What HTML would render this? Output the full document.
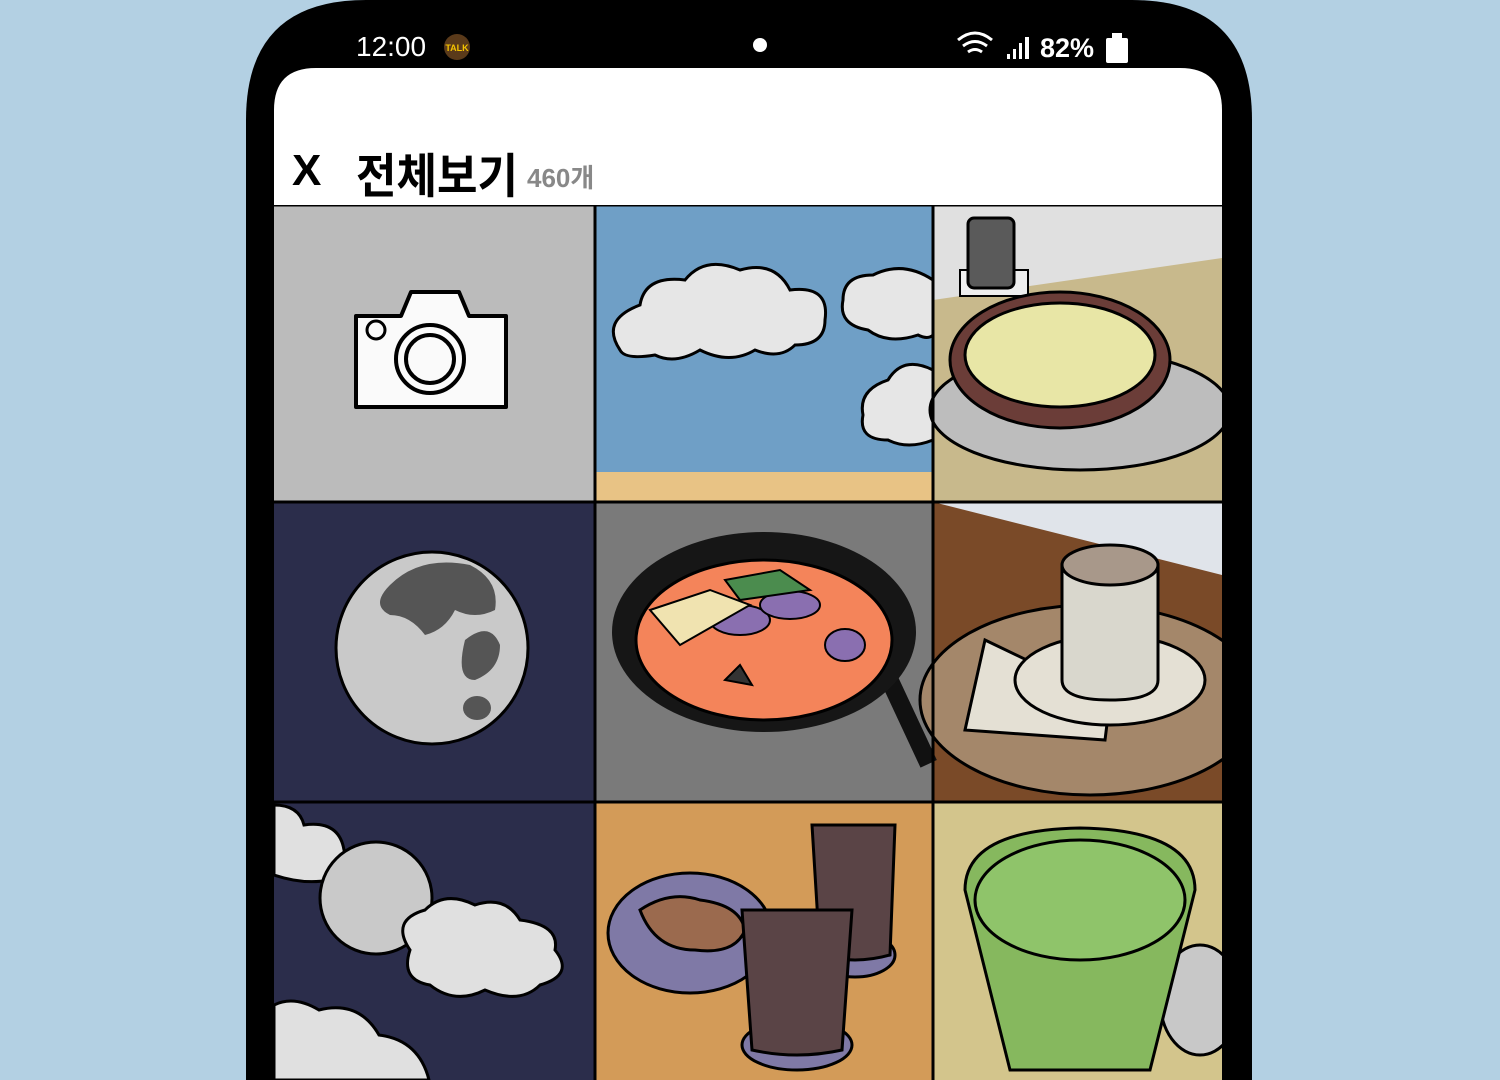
<!DOCTYPE html>
<html><head><meta charset="utf-8"><style>
html,body{margin:0;padding:0;width:1500px;height:1080px;overflow:hidden;background:#b3d0e3}
svg{position:absolute;left:0;top:0}
.t{position:absolute;font-family:"Liberation Sans","Noto Sans CJK KR",sans-serif;}
</style></head><body>
<svg width="1500" height="1080" viewBox="0 0 1500 1080">
<defs><clipPath id="c"><rect x="274" y="205" width="948" height="875"/></clipPath></defs>
<path d="M246 1080 V120 Q246 0 366 0 H1132 Q1252 0 1252 120 V1080 Z" fill="#000"/>
<path d="M274 1080 V110 Q274 68 316 68 H1180 Q1222 68 1222 110 V1080 Z" fill="#fff"/>
<g clip-path="url(#c)">
<rect x="274" y="205" width="321" height="297" fill="#bbbbbb"/>
<rect x="595" y="205" width="338" height="267" fill="#6f9fc6"/>
<rect x="595" y="472" width="338" height="30" fill="#e8c385"/>
<rect x="933" y="205" width="289" height="297" fill="#c8b98c"/>
<polygon points="933,205 1222,205 1222,258 933,300" fill="#e0e0e0"/>
<rect x="274" y="502" width="321" height="300" fill="#2b2d4b"/>
<rect x="595" y="502" width="338" height="300" fill="#7a7a7a"/>
<rect x="933" y="502" width="289" height="300" fill="#7a4a28"/>
<polygon points="933,502 1222,502 1222,575" fill="#e0e4ea"/>
<rect x="274" y="802" width="321" height="278" fill="#2b2d4b"/>
<rect x="595" y="802" width="338" height="278" fill="#d39b58"/>
<rect x="933" y="802" width="289" height="278" fill="#d3c58c"/>
<path d="M356 316 h45 l10 -24 h48 l10 24 h37 v91 h-150 z" fill="#fafafa" stroke="#000" stroke-width="4" stroke-linejoin="round"/>
<circle cx="430" cy="359" r="34" fill="none" stroke="#000" stroke-width="4"/>
<circle cx="430" cy="359" r="24" fill="none" stroke="#000" stroke-width="4"/>
<circle cx="376" cy="330" r="9" fill="none" stroke="#000" stroke-width="3"/>
<g fill="#e6e6e6" stroke="#000" stroke-width="3">
<path d="M620 350 q-20 -30 20 -45 q5 -30 45 -25 q20 -25 55 -10 q35 -10 50 20 q40 -5 35 30 q0 25 -30 25 q-15 15 -40 5 q-25 15 -55 0 q-25 15 -45 5 q-30 5 -35 -5 z"/>
<path d="M933 280 q-30 -20 -60 -5 q-30 0 -30 25 q-5 25 25 30 q20 15 50 5 q10 5 15 0 z"/>
<path d="M933 370 q-30 -15 -45 10 q-30 10 -25 35 q-5 25 25 25 q20 10 45 0 z"/>
</g>
<rect x="960" y="270" width="68" height="26" fill="#eee" stroke="#000" stroke-width="2"/>
<rect x="968" y="218" width="46" height="70" rx="6" fill="#5a5a5a" stroke="#000" stroke-width="3"/>
<ellipse cx="1080" cy="410" rx="150" ry="60" fill="#bdbdbd" stroke="#000" stroke-width="3"/>
<ellipse cx="1060" cy="360" rx="110" ry="68" fill="#6b3d38" stroke="#000" stroke-width="3"/>
<ellipse cx="1060" cy="355" rx="95" ry="52" fill="#e8e6a6" stroke="#000" stroke-width="3"/>
<circle cx="432" cy="648" r="96" fill="#c9c9c9" stroke="#000" stroke-width="3"/>
<path d="M390 585 q30 -30 80 -20 q30 15 25 45 q-20 10 -40 0 q-10 20 -30 25 q-15 -20 -35 -20 q-20 -10 0 -30 z" fill="#555"/>
<path d="M465 640 q25 -20 35 5 q0 25 -25 35 q-20 0 -10 -40 z" fill="#555"/>
<ellipse cx="477" cy="708" rx="14" ry="12" fill="#555"/>
<rect x="890" y="660" width="18" height="110" fill="#111" transform="rotate(-25 900 700)"/>
<ellipse cx="764" cy="632" rx="152" ry="100" fill="#161616"/>
<ellipse cx="764" cy="640" rx="128" ry="80" fill="#f4845a" stroke="#000" stroke-width="3"/>
<g stroke="#000" stroke-width="2"><ellipse cx="740" cy="620" rx="30" ry="15" fill="#8a6fb0"/><ellipse cx="790" cy="605" rx="30" ry="14" fill="#8a6fb0"/><ellipse cx="845" cy="645" rx="20" ry="16" fill="#8a6fb0"/><path d="M650 610 l60 -20 l40 15 l-70 40 z" fill="#f0e3b0"/><path d="M725 580 l55 -10 l30 20 l-70 10 z" fill="#4b8c4e"/><path d="M725 680 l15 -15 l12 20 z" fill="#333"/></g>
<ellipse cx="1090" cy="700" rx="170" ry="95" fill="#a4876a" stroke="#000" stroke-width="3"/>
<polygon points="985,640 1110,700 1105,740 965,730" fill="#e4e0d4" stroke="#000" stroke-width="3"/>
<ellipse cx="1110" cy="680" rx="95" ry="45" fill="#e4e0d4" stroke="#000" stroke-width="3"/>
<path d="M1062 565 v115 q0 20 48 20 q48 0 48 -20 v-115 z" fill="#d9d7cd" stroke="#000" stroke-width="3"/>
<ellipse cx="1110" cy="565" rx="48" ry="20" fill="#a8988a" stroke="#000" stroke-width="3"/>
<g fill="#e0e0e0" stroke="#000" stroke-width="3">
<path d="M274 805 q25 0 30 20 q35 -5 40 25 q20 20 -15 30 q-25 5 -55 -5 z"/>
<circle cx="376" cy="898" r="56" fill="#c9c9c9"/>
<path d="M410 950 q-20 -30 15 -40 q20 -20 50 -5 q30 -10 45 15 q40 5 35 30 q20 25 -15 35 q-20 20 -55 5 q-30 15 -55 -5 q-30 -5 -20 -35 z"/>
<path d="M274 1005 q20 -10 45 5 q40 -10 60 25 q40 5 50 45 h-155 z"/>
</g>
<ellipse cx="690" cy="933" rx="82" ry="60" fill="#7f79a6" stroke="#000" stroke-width="3"/>
<path d="M640 910 q30 -20 60 -10 q40 5 45 30 q-10 25 -50 20 q-40 0 -55 -40 z" fill="#9b6a4e" stroke="#000" stroke-width="3"/>
<ellipse cx="855" cy="955" rx="40" ry="22" fill="#7f79a6" stroke="#000" stroke-width="3"/>
<path d="M812 825 l8 130 q35 10 70 0 l5 -130 z" fill="#5a4446" stroke="#000" stroke-width="3"/>
<ellipse cx="797" cy="1045" rx="55" ry="25" fill="#7f79a6" stroke="#000" stroke-width="3"/>
<path d="M742 910 l10 140 q45 10 90 0 l10 -140 z" fill="#5a4446" stroke="#000" stroke-width="3"/>
<ellipse cx="1200" cy="1000" rx="40" ry="55" fill="#c8c8c8" stroke="#000" stroke-width="3"/>
<path d="M965 890 q0 -60 115 -62 q115 2 115 62 l-45 180 h-140 z" fill="#86b85e" stroke="#000" stroke-width="3"/>
<ellipse cx="1080" cy="900" rx="105" ry="60" fill="#8fc46a" stroke="#000" stroke-width="3"/>
<g stroke="#000" stroke-width="3">
<line x1="274" y1="205" x2="1222" y2="205"/><line x1="274" y1="502" x2="1222" y2="502"/><line x1="274" y1="802" x2="1222" y2="802"/>
<line x1="595" y1="205" x2="595" y2="1080"/><line x1="933" y1="205" x2="933" y2="1080"/>
</g>
</g>
<circle cx="760" cy="45" r="7" fill="#fff"/>
<circle cx="457" cy="47" r="13" fill="#5a3a1a"/>
<text x="457" y="51" font-size="9" font-family="Liberation Sans" fill="#f5c400" text-anchor="middle" font-weight="bold">TALK</text>
<path d="M958 40 q17 -14 34 0 M963 46 q12 -9 24 0 M968 52 q7 -5 14 0" stroke="#fff" stroke-width="3" fill="none"/>
<g fill="#fff"><rect x="1007" y="54" width="3" height="5"/><rect x="1013" y="49" width="3" height="10"/><rect x="1019" y="43" width="3" height="16"/><rect x="1025" y="37" width="4" height="22"/>
<rect x="1106" y="38" width="22" height="25" rx="2"/><rect x="1112" y="33" width="10" height="6"/></g>
</svg>
<div class="t" style="left:356px;top:31px;font-size:28px;color:#fff">12:00</div>
<div class="t" style="left:1040px;top:33px;font-size:27px;color:#fff;font-weight:bold">82%</div>
<div class="t" style="left:292px;top:146px;font-size:44px;color:#000;font-weight:bold">X</div>
<div class="t" style="left:356px;top:138px;font-size:44px;color:#000;font-weight:bold;transform:scaleY(1.08);transform-origin:left top">전체보기</div>
<div class="t" style="left:527px;top:158px;font-size:26px;color:#888;font-weight:bold">460개</div>
</body></html>
